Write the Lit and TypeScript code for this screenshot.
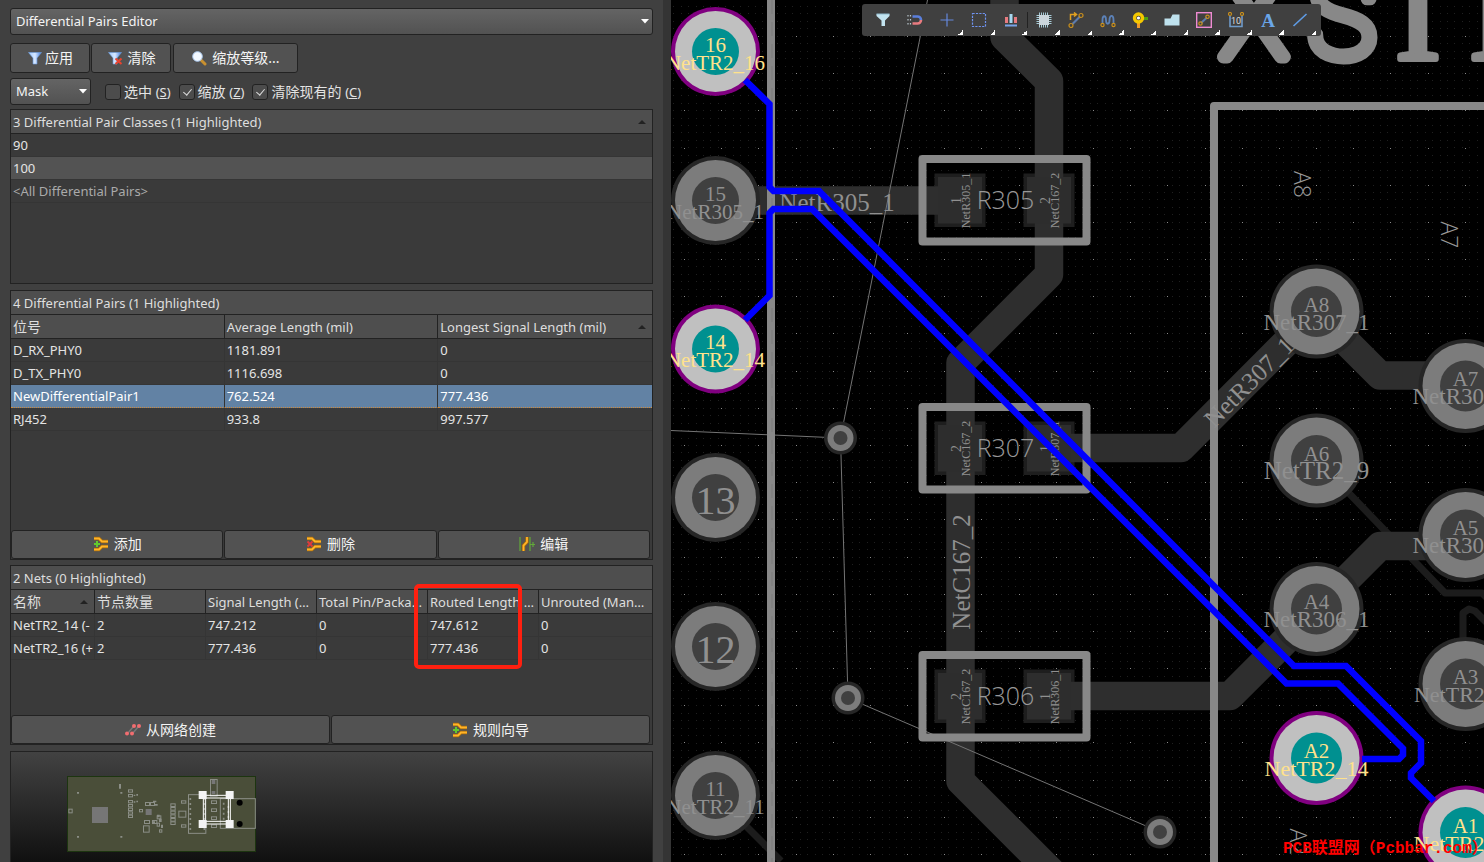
import { LitElement, html, svg, css } from "lit";
import { customElement } from "lit/decorators.js";

const gridPath = (pitch: number, x0: number, y0: number) => {
  let d = "";
  for (let i = 0; i < 1900 / pitch; i++) {
    const x = Math.round(x0 + i * pitch);
    for (let j = 0; j < 1200 / pitch; j++) {
      d += `M${x} ${Math.round(y0 + j * pitch)}h1v1h-1z`;
    }
  }
  return d;
};
const MINOR = gridPath(7.44, 2.2, 6);
const MAJOR = gridPath(37.18, 13, 36);

type Pad = { x: number; y: number; id: string; net?: string; lit?: boolean; big?: boolean };
const PADS: Pad[] = [
  { x: 44.5, y: 51.5, id: "16", net: "NetTR2_16", lit: true },
  { x: 44.5, y: 200.5, id: "15", net: "NetR305_1" },
  { x: 44.5, y: 349, id: "14", net: "NetTR2_14", lit: true },
  { x: 44.5, y: 497.5, id: "13" },
  { x: 44.5, y: 646.5, id: "12" },
  { x: 44.5, y: 795.5, id: "11", net: "NetTR2_11" },
  { x: 645.5, y: 311.5, id: "A8", net: "NetR307_1", big: true },
  { x: 794.5, y: 386, id: "A7", net: "NetR307_1", big: true },
  { x: 645.5, y: 460.5, id: "A6", net: "NetTR2_9", big: true },
  { x: 794.5, y: 535, id: "A5", net: "NetR306_1", big: true },
  { x: 645.5, y: 609, id: "A4", net: "NetR306_1", big: true },
  { x: 794.5, y: 684, id: "A3", net: "NetTR2_11", big: true },
  { x: 645.5, y: 758, id: "A2", net: "NetTR2_14", lit: true, big: true },
  { x: 794.5, y: 832.5, id: "A1", net: "NetTR2_16", lit: true, big: true },
];

const PARTS = [
  { y: 0, name: "R305", l: ["1", "NetR305_1"], r: ["2", "NetC167_2"] },
  { y: 248, name: "R307", l: ["2", "NetC167_2"], r: ["1", "NetR307_1"] },
  { y: 496, name: "R306", l: ["2", "NetC167_2"], r: ["1", "NetR306_1"] },
];

const VIAS = [[169.5, 438], [177, 698], [489, 832]];

const padShape = (p: Pad) => {
  const r = p.big ? 47 : 44.5;
  return svg`
    <circle cx=${p.x} cy=${p.y} r=${r} class=${p.lit ? "ring-lit" : "ring"} />
    <circle cx=${p.x} cy=${p.y} r=${r - 4} class=${p.lit ? "copper-lit" : "copper"} />
    <circle cx=${p.x} cy=${p.y} r=${p.big ? 25.5 : 23.5} class=${p.lit ? "hole-lit" : "hole"} />`;
};

const netSize = (p: Pad) => (!p.big ? 21 : p.net!.length < 9 ? 25 : p.net!.startsWith("NetR") ? 23 : 22);

const padText = (p: Pad) =>
  p.net
    ? svg`<g class=${p.lit ? "net net-lit" : "net"}>
        <text x=${p.x} y=${p.y} font-size="21">${p.id}</text>
        <text x=${p.x} y=${p.y + 18} font-size=${netSize(p)}>${p.net}</text></g>`
    : svg`<text class="net" x=${p.x} y=${p.y + 16} font-size="40">${p.id}</text>`;

const vtext = (x: number, y: number, size: number, t: string) =>
  svg`<text class="net" transform="translate(${x} ${y}) rotate(-90)" font-size=${size}>${t}</text>`;

const partPads = (p: (typeof PARTS)[0]) => svg`<g transform="translate(0 ${p.y})">
    <rect x="263.5" y="173.5" width="51" height="53.5" fill="#1e1e1e" />
    <rect x="352.5" y="173.5" width="51" height="53.5" fill="#1e1e1e" /></g>`;

const partCores = (p: (typeof PARTS)[0]) => svg`<g transform="translate(0 ${p.y})">
    <rect x="267" y="177" width="44" height="46.5" fill="#2d2d2d" />
    <rect x="356" y="177" width="44" height="46.5" fill="#2d2d2d" /></g>`;

const partFrame = (p: (typeof PARTS)[0]) => svg`<g transform="translate(0 ${p.y})">
    <rect x="251.5" y="159" width="164" height="82.5" class="silk" />
    ${vtext(290, 200.5, 14, p.l[0])}${vtext(299, 200.5, 12, p.l[1])}
    ${vtext(379, 200.5, 14, p.r[0])}${vtext(388, 200.5, 12, p.r[1])}
    <text class="name" x="334.5" y="209" font-size="25">${p.name}</text></g>`;

const board = svg`
  <path d=${MINOR} fill="#202020" />
  <path d=${MAJOR} fill="#8a8a8a" />
  <g class="thin">
    <path d="M646 460 L774 593H811L830 612" /><path d="M792 640V613L798 609L804 611L820 627" />
    <path d="M74 825L110 861" />
  </g>
  ${PARTS.map(partPads)}
  <g class="track">
    <path d="M333.5 -10V37L378 81V274.5L289.5 363V781L400 891.5" />
    <path d="M44 200.5H290" />
    <path d="M378 448H510L645.5 312L709 375.5H794" />
    <path d="M378 696H559L645.5 609.5L709 546H794" />
  </g>
  ${PARTS.map(partCores)}
  <path d="M256.500 0L169.500 438L177 698L489 832M0 430.500L169.500 438" stroke="#747474" fill="none" />
  <g class="silk">
    <path d="M100 0V1200" /><path d="M543 1200V106H1600" />
    <path d="M221.500 -8V0M445 -8V0" stroke-width="5" />
  </g>
  <path d="M101 0V1200" stroke="#7a7a7a" stroke-dasharray="14 8" />
  <g class="legend">
    <text x="583" y="57" font-size="112">X</text>
    <text x="671" y="57" font-size="114">S</text>
    <text class="serif" x="747" y="59" font-size="136">I</text>
    <text class="serif" x="821" y="59" font-size="136">I</text>
  </g>
  ${VIAS.map(([x, y]) => svg`<circle cx=${x} cy=${y} r="16.500" class="ring" />
    <circle cx=${x} cy=${y} r="13" class="copper" /><circle cx=${x} cy=${y} r="7" class="hole" />`)}
  ${PADS.map(padShape)}
  ${PARTS.map(partFrame)}
  ${PADS.map(padText)}
  <text class="net" x="166" y="211" font-size="25">NetR305_1</text>
  ${vtext(299, 572, 25, "NetC167_2")}
  <text class="net" transform="translate(584 388) rotate(-45)" font-size="25">NetR307_1</text>
  <g class="name">
    <text transform="translate(622.500 184.500) rotate(90)" font-size="23">A8</text>
    <text transform="translate(769.500 235) rotate(90)" font-size="23">A7</text>
    <text transform="translate(619 842) rotate(90)" font-size="23">A2</text>
  </g>
  <g class="pair">
    <path d="M74 80L98.500 104V187L102.500 191H148L623 666H675L750 741V763L740 773V778L763 801" />
    <path d="M74 320L98.500 295.500V213L102.500 209H141L615.500 683.500H667L732 748.500V755L728 759H691" />
  </g>
  <text class="mark" x="612" y="853">PCB联盟网（Pcbbar.com）</text>`;

const funnel = svg`<path d="M1.500 2.500h13L10 8v6H6V8z" fill="url(#fg)" stroke="#6f9fe0" stroke-width=".6" />`;
const grad = svg`<linearGradient id="fg" x1="0" x2="1"><stop offset="0" stop-color="#9cc8ff" /><stop offset=".5" stop-color="#d8e8ff" /><stop offset="1" stop-color="#3d7be0" /></linearGradient>`;
const pairLines = svg`<path d="M1 2.500H6L9 5.500H15M1 13.500H6L9 10.500H15" fill="none" stroke="#a86a08" stroke-width="3.400" /><path d="M1 2.500H6L9 5.500H15M1 13.500H6L9 10.500H15" fill="none" stroke="#ffb428" stroke-width="2" />`;

const icon = (body: unknown) => html`<svg class="ico" width="16" height="16" viewBox="0 0 16 16" aria-hidden="true">${body}</svg>`;

const I = {
  apply: icon(svg`${grad}${funnel}`),
  clear: icon(svg`${grad}${funnel}<path d="M8.500 8.500l6 5.500M14.500 8.500l-6 5.500" stroke="#e8432f" stroke-width="2" />`),
  zoom: icon(svg`<path d="M10 10l4 4" stroke="#c89030" stroke-width="3" stroke-linecap="round" /><circle cx="6.500" cy="6.500" r="4.800" fill="#f2f8ff" stroke="#a9c8ee" />`),
  add: icon(svg`${pairLines}<path d="M4 5v6M1 8h6" stroke="#62c92d" stroke-width="2" />`),
  del: icon(svg`${pairLines}<path d="M1.500 5.500l5 5M6.500 5.500l-5 5" stroke="#e23a3a" stroke-width="1.800" />`),
  edit: icon(svg`<path d="M1 1v14M11 1v14M11.500 8.500h4.500M14 6v5" stroke="#62a93a" stroke-width="1.200" /><path d="M8 1v5L4.500 9.500V15" fill="none" stroke="#a86a08" stroke-width="3.400" /><path d="M8 1v5L4.500 9.500V15" fill="none" stroke="#ffb428" stroke-width="1.800" />`),
  nets: icon(svg`<path d="M2 12L9 4M7 12L14 4" stroke="#777" stroke-width="1.500" /><g fill="#f26d70"><circle cx="9" cy="4" r="2" /><circle cx="14" cy="4" r="2" /><circle cx="2" cy="11.500" r="2" /><circle cx="7" cy="11.500" r="2" /></g>`),
};

const ring = (x: number, y: number, r = 2) => svg`<circle cx=${x} cy=${y} r=${r} fill="none" stroke="#c98f1c" stroke-width="1.200" />`;
const TOOLS: { label: string; more?: boolean; body: unknown }[] = [
  { label: "Filter", body: svg`<path d="M1.500 2h13v2L10 8.500V14H6.500V8.500L1.500 4z" fill="#c3e4f0" /><path d="M1.500 2h13" stroke="#8fb9cc" />` },
  { label: "Snap", body: svg`<path d="M5.500 4.500h5a3.500 3.500 0 0 1 3.500 3.500" fill="none" stroke="#5b7fdc" stroke-width="2.600" /><path d="M5.500 11.500h5a3.500 3.500 0 0 0 3.500-3.500" fill="none" stroke="#e87b80" stroke-width="2.600" /><path d="M1 3v11M3.500 3v11" stroke="#b9c6cc" stroke-width="1.200" stroke-dasharray="1.500 2.500" />` },
  { label: "Place", more: true, body: svg`<path d="M8 1.500v13M1.500 8h13" stroke="#6488dc" stroke-width="1.200" />` },
  { label: "Select area", more: true, body: svg`<rect x="1.500" y="1.500" width="13" height="13" fill="none" stroke="#6f93f0" stroke-width="1.200" stroke-dasharray="2.200 1.200" />` },
  { label: "Align", more: true, body: svg`<path d="M2 5h3v6H2zM11 5h3v6h-3z" fill="#e87b80" /><path d="M6.500 2h3v9h-3z" fill="#a8d8f0" /><path d="M2 13.500h12" stroke="#78a4e8" stroke-width="2" />` },
  { label: "Component", more: true, body: svg`<path d="M3.500 .5v15M5.500 .5v15M7.500 .5v15M9.500 .5v15M11.500 .5v15M.5 3.500h15M.5 5.500h15M.5 7.500h15M.5 9.500h15M.5 11.500h15" stroke="#a8ccd8" stroke-width="1" /><rect x="3" y="3" width="10" height="10" fill="#ccd6dc" />` },
  { label: "Route", more: true, body: svg`<path d="M4.500 12L12 4.500" stroke="#5c7cae" stroke-width="2.200" />${ring(13, 3.500)}${ring(3, 13.500)}<path d="M2.500 8V2.500H8M6 .5l2.500 2L6 4.500" fill="none" stroke="#e0a020" stroke-width="1.500" />` },
  { label: "Tune", more: true, body: svg`<path d="M2.500 11V8c0-5 3.500-5 3.500 0s3.500 5 3.500 0 4-6 4 0v3" fill="none" stroke="#5c82b8" stroke-width="1.800" />${ring(2.500, 13, 1.600)}${ring(13.500, 13, 1.600)}` },
  { label: "Via", more: true, body: svg`<path d="M6.500 9v7" stroke="#f09a28" stroke-width="3" /><path d="M9 6.500h7" stroke="#4fa010" stroke-width="3" /><circle cx="6.500" cy="6" r="4" fill="#444" stroke="#f5c800" stroke-width="3.400" /><circle cx="6.500" cy="6" r="1.600" fill="#fff" />` },
  { label: "Polygon", more: true, body: svg`<path d="M.5 6.500h6l2-4h7v11H.5z" fill="#bfe2ee" />` },
  { label: "Keepout", more: true, body: svg`<rect x=".7" y=".7" width="14.600" height="14.600" fill="none" stroke="#ee8bd2" stroke-width="1.400" /><path d="M5 11l6-5.500" stroke="#5c7cae" stroke-width="2" />${ring(4.500, 11.500, 1.700)}${ring(11.500, 4.800, 1.700)}` },
  { label: "Dimension", more: true, body: svg`<path d="M2 4v10.500h12V4" fill="none" stroke="#6f9ac8" stroke-width="1.600" />${ring(2, 2, 1.500)}${ring(14, 2, 1.500)}<text x="8" y="12" font-size="9" text-anchor="middle" font-family="Roboto, sans-serif" fill="#ddd">10</text>` },
  { label: "Text", more: true, body: svg`<text x="8" y="15" font-size="19" font-weight="bold" text-anchor="middle" font-family="Liberation Serif, serif" fill="#6aa6e8">A</text>` },
  { label: "Line", more: true, body: svg`<path d="M1.500 14L14.500 2" stroke="#5f9ce6" stroke-width="1.600" />` },
];

const chip = (x: number, y: number, w: number, h: number) =>
  svg`<rect x=${x + 1.5} y=${y + 1.5} width=${w - 3} height=${h - 3} fill="none" stroke="#8b8e86" stroke-width="3" />`;

const miniMap = svg`
  <rect x="1.500" y="1.500" width="564" height="225" fill="#4a4e39" stroke="#1d3510" stroke-width="3" />
  <rect x="75" y="93" width="48" height="48" fill="#767676" />
  <g fill="#8b8e86">
    <path d="M30 48h6v5h-6zM160 48h6v5h-6zM30 180h6v5h-6zM160 180h6v5h-6zM156 24h6v14h-6z" />
    <path d="M200 56h5v4h-5zM208 54h5v5h-5zM200 76h5v4h-5zM208 74h5v5h-5zM258 74h10v5h-10zM264 84h8v5h-8zM270 116h8v8h-8zM276 128h8v10h-8zM282 146h6v10h-6zM256 136h8v6h-8z" />
  </g>
  ${[40, 54, 72, 84, 95, 106, 116].map((y) => chip(183, y, 15, 10))}
  ${[82, 93, 104, 115, 126, 136].map((y) => chip(310, y, 16, 11))}
  ${[[4, 98, 13, 14], [234, 78, 15, 12], [249, 78, 15, 12], [216, 99, 12, 10], [231, 132, 18, 12], [255, 132, 16, 12], [228, 148, 20, 22], [269, 118, 14, 12], [269, 140, 10, 12], [276, 160, 10, 10], [342, 73, 16, 10], [342, 145, 16, 10], [334, 104, 24, 21]].map(([x, y, w, h]) => chip(x, y, w, h))}
  <rect x="236" y="99" width="18" height="18" fill="#767676" />
  <g fill="none" stroke="#8b8e86" stroke-width="3">
    <rect x="364.500" y="56" width="52" height="116" /><rect x="430.500" y="10.500" width="20" height="50" />
    <rect x="460" y="68" width="105" height="89" />
    <path d="M370 66v106M412 66v106M470 80v60M484 90v50" stroke-dasharray="6 9" stroke-width="5" />
  </g>
  <path d="M434 12h11v12h-11zM434 45h11v9h-11z" fill="#777" />
  ${[73, 97, 121, 145].map((y) => chip(432, y, 18, 11))}
  <circle cx="518" cy="80" r="9" /><circle cx="518" cy="144" r="9" />
  <path d="M409 58H490V144H409zM415 66H484V136H415z" fill="none" stroke="#fff" stroke-width="3" />
  <path d="M395 45h24v24h-24zM476 45h24v24h-24zM395 132h24v24h-24zM476 132h24v24h-24z" fill="#f4f4f4" />`;

const PAIRS = [
  ["D_RX_PHY0", "1181.891", "0"],
  ["D_TX_PHY0", "1116.698", "0"],
  ["NewDifferentialPair1", "762.524", "777.436"],
  ["RJ452", "933.8", "997.577"],
];
const NETS = [
  ["NetTR2_14 (-", "2", "747.212", "0", "747.612", "0"],
  ["NetTR2_16 (+", "2", "777.436", "0", "777.436", "0"],
];
const up = html`<svg class="sort" width="8" height="4" viewBox="0 0 8 4" aria-hidden="true"><path d="M0 4L4 0L8 4z" fill="#222" /></svg>`;
const down = html`<svg class="caret" width="8" height="5" viewBox="0 0 8 5" aria-hidden="true"><path d="M0 0H8L4 4.500z" fill="#fff" /></svg>`;

@customElement("app-root")
export class AppRoot extends LitElement {
  static styles = css`
    :host { display: flex; height: 100vh; overflow: hidden; background: #000; color: #e4e4e4;
      font: 13px/22px "Noto Sans", "Noto Sans CJK SC", sans-serif; }
    * { box-sizing: border-box; }
    .panel { position: relative; flex: 0 0 663px; display: flex; flex-direction: column; padding: 8px 10px 0; background: #404040; }
    .splitter { flex: 0 0 8px; background: #343434; }
    .canvas { position: relative; flex: 1; min-width: 0; background: #000; overflow: hidden; }
    .board { display: block; width: 100%; height: 100%; }
    button, select { font: inherit; color: #f4f4f4; margin: 0; }
    .drop { position: relative; display: flex; height: 27px; }
    .drop select { appearance: none; width: 100%; padding: 0 5px 2px; border: 1px solid #222; border-radius: 3px;
      background: linear-gradient(#646464, #525252); }
    .drop .caret { position: absolute; right: 4px; top: 11px; }
    .mask { width: 81px; }
    .actions { display: flex; gap: 1px; margin-top: 8px; }
    .btn { display: flex; align-items: center; justify-content: center; gap: 5px; height: 30px; padding: 0;
      border: 1px solid #222; border-radius: 3px; background: #525252; font-size: 14px; }
    .small { width: 80px; gap: 2px; }
    .medium { width: 80px; }
    .wide { width: 125px; margin-left: 1px; }
    .options { display: flex; align-items: center; gap: 8px; margin: 5px 0 4px; }
    .options .mask { margin-right: 6px; }
    .check { display: flex; align-items: center; gap: 3px; font-size: 14px; white-space: nowrap; }
    .check small { font-size: 13px; }
    .check input { appearance: none; position: relative; width: 16px; height: 16px; margin: 0; border: 1px solid #222; border-radius: 3px; background: #4c4c4c; }
    .check input:checked::after { content: ""; position: absolute; left: 5px; top: 2px; width: 4px; height: 7px;
      border: solid #ddd; border-width: 0 1px 1px 0; transform: rotate(40deg); }
    .box { display: flex; flex-direction: column; min-height: 0; border: 1px solid #222; background: #3a3a3a; }
    .classes { flex: 175 1 0; margin-bottom: 6px; }
    .pairs { flex: 270 1 0; margin-bottom: 5px; }
    .nets { flex: 180 1 0; margin-bottom: 6px; }
    .overview { flex: 111 1 0; min-height: 0; overflow: hidden; border: 1px solid #222; border-bottom: 0; background: linear-gradient(#424242, #101010); }
    .overview svg { display: block; margin: 24px 0 0 56px; }
    .title { position: relative; flex: none; margin: 0; height: 24px; padding: 1px 2px 0; font-size: inherit; font-weight: normal; background: #4e4e4e; border-bottom: 1px solid #222; color: #dedede; }
    .rows { list-style: none; margin: 0; padding: 0; }
    .rows li { height: 23px; padding: 0 2px; border-bottom: 1px solid #353535; }
    .rows .on { background: #535353; }
    .rows .dim { color: #aaa; }
    .sort { position: absolute; right: 6px; top: 10px; }
    table { width: 100%; border-collapse: separate; border-spacing: 0; table-layout: fixed; }
    th, td { position: relative; height: 23px; padding: 0 2px; text-align: left; font-weight: normal; white-space: nowrap; overflow: hidden;
      border-bottom: 1px solid #353535; border-right: 1px solid #353535; line-height: 22px; }
    th { height: 24px; padding-top: 1px; background: #4e4e4e; text-overflow: ellipsis; border-color: #222; color: #dedede; }
    th:last-child, td:last-child { border-right: 0; }
    .cjk { font-size: 14px; }
    .sel td { background: #6282a4; color: #fff; border-bottom: 1px dotted #d08a3a; border-right-color: #333; }
    .first { width: 84px; }
    .col { width: 111px; }
    .foot { display: flex; gap: 1px; margin-top: auto; padding-right: 2px; }
    .foot .btn { flex: 1; height: 29px; }
    .callout { position: absolute; left: 414px; top: 584px; width: 108px; height: 85px; border: 4px solid #ff2010; border-radius: 5px; pointer-events: none; }
    .tools { position: absolute; left: 191px; top: 4px; display: flex; height: 32px; padding: 0 5px; border-radius: 3px; background: #404040; }
    .tool { position: relative; width: 32px; height: 32px; padding: 0; border: 0; background: none; display: grid; place-items: center; }
    .tool.more::after { content: ""; position: absolute; right: 0; bottom: 1px; width: 5px; height: 5px;
      background: linear-gradient(135deg, transparent 50%, #fff 50%); }
    .sep { width: 1px; height: 16px; margin-top: 8px; background: #222; }
    .ring { fill: #262626; } .copper { fill: #7c7c7c; } .hole { fill: #404040; }
    .ring-lit { fill: #800080; } .copper-lit { fill: #c0c0c0; } .hole-lit { fill: #009090; }
    .track { fill: none; stroke: #2e2e2e; stroke-width: 28.5; stroke-linejoin: round; }
    .thin { fill: none; stroke: #1c1c1c; stroke-width: 7; stroke-linejoin: round; }
    .silk { fill: none; stroke: #888; stroke-width: 8; stroke-linejoin: round; }
    .pair { fill: none; stroke: #0000ff; stroke-width: 6.5; }
    .net { font-family: "Liberation Serif", serif; fill: #909090; text-anchor: middle; }
    .net-lit { fill: #ffe28c; }
    .name { font-family: "Open Sans", sans-serif; font-weight: 300; fill: #989898; text-anchor: middle; }
    .legend { font-family: Roboto, sans-serif; font-weight: 100; fill: #888; stroke: #888; stroke-width: 13; stroke-linejoin: round; text-anchor: middle; }
    .legend .serif { font-family: "Liberation Serif", serif; stroke-width: 6; font-weight: 400; }
    .mark { font: bold 16px "Liberation Mono", "Noto Sans CJK SC", monospace; fill: #ff0000; }
  `;

  render() {
    return html`
      <aside class="panel">
        <div class="drop"><select aria-label="Editor mode"><option>Differential Pairs Editor</option></select>${down}</div>
        <div class="actions">
          <button class="btn small">${I.apply}应用</button>
          <button class="btn medium">${I.clear}清除</button>
          <button class="btn wide">${I.zoom}缩放等级...</button>
        </div>
        <div class="options">
          <div class="drop mask"><select aria-label="Highlight mode"><option>Mask</option></select>${down}</div>
          <label class="check"><input type="checkbox" /><span>选中 <small>(<u>S</u>)</small></span></label>
          <label class="check"><input type="checkbox" checked /><span>缩放 <small>(<u>Z</u>)</small></span></label>
          <label class="check"><input type="checkbox" checked /><span>清除现有的 <small>(<u>C</u>)</small></span></label>
        </div>
        <section class="box classes">
          <h2 class="title">3 Differential Pair Classes (1 Highlighted)${up}</h2>
          <ul class="rows"><li>90</li><li class="on">100</li><li class="dim">&lt;All Differential Pairs&gt;</li></ul>
        </section>
        <section class="box pairs">
          <h2 class="title">4 Differential Pairs (1 Highlighted)</h2>
          <table>
            <thead><tr><th class="cjk">位号</th><th>Average Length (mil)</th><th>Longest Signal Length (mil)${up}</th></tr></thead>
            <tbody>${PAIRS.map((r, i) => html`<tr class=${i === 2 ? "sel" : ""}>${r.map((c) => html`<td>${c}</td>`)}</tr>`)}</tbody>
          </table>
          <div class="foot">
            <button class="btn">${I.add}添加</button><button class="btn">${I.del}删除</button><button class="btn">${I.edit}编辑</button>
          </div>
        </section>
        <section class="box nets">
          <h2 class="title">2 Nets (0 Highlighted)</h2>
          <table>
            <thead><tr><th class="cjk first">名称${up}</th><th class="cjk col">节点数量</th><th class="col">Signal Length (mil)</th>
              <th class="col">Total Pin/Package Length</th><th class="col">Routed Length (mil)</th><th>Unrouted (Manhattan)</th></tr></thead>
            <tbody>${NETS.map((r) => html`<tr>${r.map((c) => html`<td>${c}</td>`)}</tr>`)}</tbody>
          </table>
          <div class="foot">
            <button class="btn">${I.nets}从网络创建</button><button class="btn">${I.add}规则向导</button>
          </div>
        </section>
        <div class="overview"><svg width="189" height="76" viewBox="0 0 567 228">${miniMap}</svg></div>
        <div class="callout"></div>
      </aside>
      <div class="splitter"></div>
      <main class="canvas">
        <svg class="board">${board}</svg>
        <div class="tools">
          ${TOOLS.map((t, i) => html`${i === 5 ? html`<span class="sep"></span>` : ""}<button class="tool ${t.more ? "more" : ""}" aria-label=${t.label}>${icon(t.body)}</button>`)}
        </div>
      </main>`;
  }
}
